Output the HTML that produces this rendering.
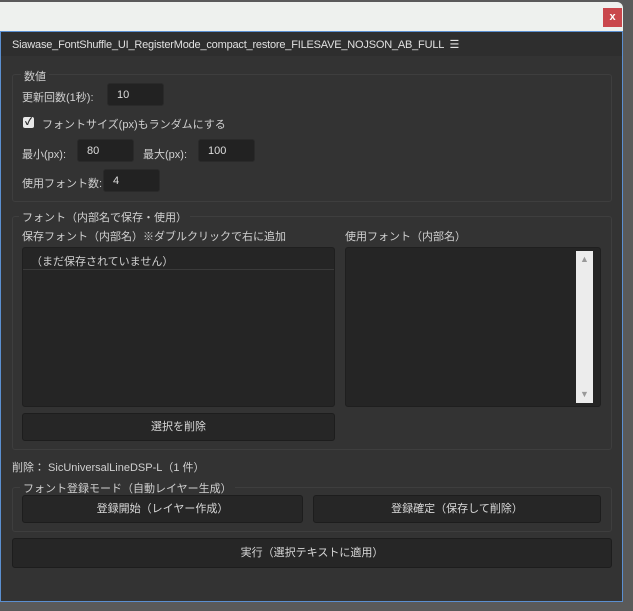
<!DOCTYPE html>
<html><head><meta charset="utf-8"><style>
*{box-sizing:border-box;margin:0;padding:0}
body{width:633px;height:611px;background:#5a5a5a;position:relative;overflow:hidden;font-family:"Liberation Sans","Noto Sans CJK JP",sans-serif;font-size:11px;color:#d0d0d0}
.a{position:absolute}
.top{left:0;top:2px;width:623px;height:30px;background:#eef1ee;border-top-right-radius:6px}
.x{left:603px;top:8px;width:19px;height:19px;background:#c9474c;color:#fff;font-weight:bold;font-size:11px;text-align:center;line-height:18px}
.panel{left:0;top:31px;width:623px;height:571px;background:#333;border:1px solid #5b8fd0}
.tb{left:1px;top:32px;width:621px;height:24px;background:#2e2e2e}
.grp{border:1px solid #3e3e3e;border-radius:3px}
.lab{background:#333;padding:0 3px}
.in{background:#222;border:1px solid #2a2a2a;border-radius:3px;padding-left:9px;padding-top:1px;line-height:21px;color:#ddd}
.btn{background:#262626;border:1px solid #1d1d1d;border-radius:3px;text-align:center;color:#d8d8d8}
.list{background:#252525;border:1px solid #1f1f1f;border-radius:3px}
</style></head><body>
<div class="a top"></div>
<div class="a x">x</div>
<div class="a panel"></div>
<div class="a tb"></div>
<div class="a" style="left:12px;top:38px;color:#e0e0e0;letter-spacing:-0.2px">Siawase_FontShuffle_UI_RegisterMode_compact_restore_FILESAVE_NOJSON_AB_FULL &nbsp;☰</div>

<div class="a grp" style="left:12px;top:74px;width:600px;height:128px"></div>
<div class="a lab" style="left:21px;top:68px">数値</div>
<div class="a" style="left:22px;top:89px">更新回数(1秒):</div>
<div class="a in" style="left:107px;top:83px;width:57px;height:23px">10</div>
<div class="a" style="left:23px;top:117px;width:11px;height:11px;background:#e8e8e8;border-radius:2px;color:#222;font-size:10px;line-height:11px;text-align:center;font-weight:bold">✓</div>
<div class="a" style="left:42px;top:116px">フォントサイズ(px)もランダムにする</div>
<div class="a" style="left:22px;top:146px">最小(px):</div>
<div class="a in" style="left:77px;top:139px;width:57px;height:23px">80</div>
<div class="a" style="left:143px;top:146px">最大(px):</div>
<div class="a in" style="left:198px;top:139px;width:57px;height:23px">100</div>
<div class="a" style="left:22px;top:175px">使用フォント数:</div>
<div class="a in" style="left:103px;top:169px;width:57px;height:23px">4</div>

<div class="a grp" style="left:12px;top:216px;width:600px;height:234px"></div>
<div class="a lab" style="left:19px;top:209px">フォント（内部名で保存・使用）</div>
<div class="a" style="left:22px;top:228px">保存フォント（内部名）※ダブルクリックで右に追加</div>
<div class="a" style="left:345px;top:228px">使用フォント（内部名）</div>
<div class="a list" style="left:22px;top:247px;width:313px;height:160px"></div>
<div class="a" style="left:23px;top:269px;width:311px;height:1px;background:#3a3a3a"></div>
<div class="a" style="left:31px;top:253px">（まだ保存されていません）</div>
<div class="a list" style="left:345px;top:247px;width:256px;height:160px"></div>
<div class="a" style="left:576px;top:251px;width:17px;height:152px;background:#ececec"></div>
<div class="a" style="left:580px;top:254px;color:#999;font-size:9px">▲</div>
<div class="a" style="left:580px;top:389px;color:#999;font-size:9px">▼</div>
<div class="a btn" style="left:22px;top:413px;width:313px;height:28px;line-height:26px">選択を削除</div>

<div class="a" style="left:12px;top:459px">削除： SicUniversalLineDSP-L（1 件）</div>

<div class="a grp" style="left:12px;top:487px;width:600px;height:45px"></div>
<div class="a lab" style="left:20px;top:480px">フォント登録モード（自動レイヤー生成）</div>
<div class="a btn" style="left:22px;top:495px;width:281px;height:28px;line-height:26px">登録開始（レイヤー作成）</div>
<div class="a btn" style="left:313px;top:495px;width:288px;height:28px;line-height:26px">登録確定（保存して削除）</div>
<div class="a btn" style="left:12px;top:538px;width:600px;height:30px;line-height:28px">実行（選択テキストに適用）</div>
</body></html>
